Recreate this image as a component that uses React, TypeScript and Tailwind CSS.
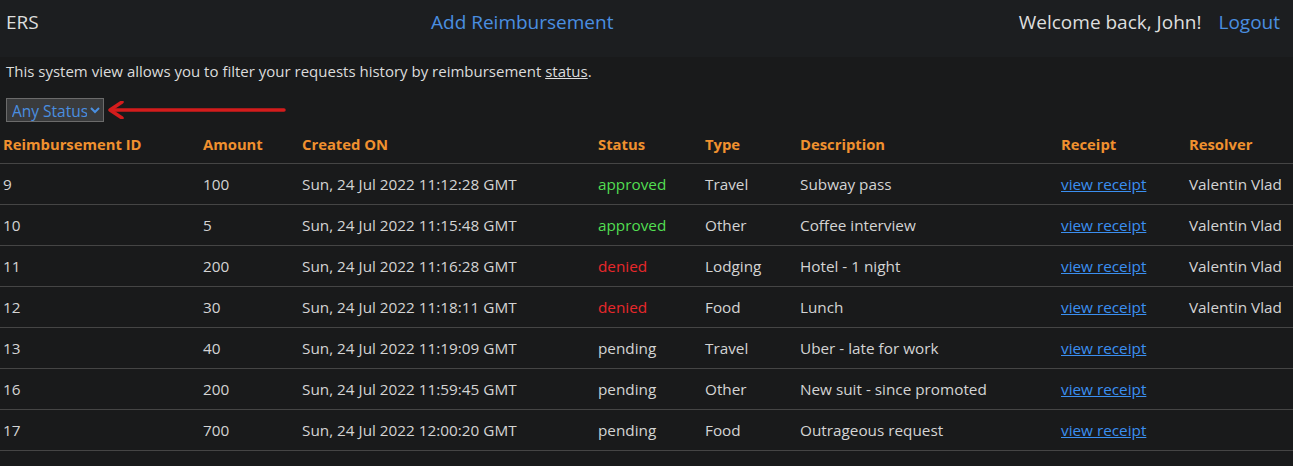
import { useState } from "react";

type Row = {
  id: number;
  amount: number;
  created: string;
  status: "approved" | "denied" | "pending";
  type: string;
  description: string;
  resolver: string;
};

const rows: Row[] = [
  { id: 9, amount: 100, created: "Sun, 24 Jul 2022 11:12:28 GMT", status: "approved", type: "Travel", description: "Subway pass", resolver: "Valentin Vlad" },
  { id: 10, amount: 5, created: "Sun, 24 Jul 2022 11:15:48 GMT", status: "approved", type: "Other", description: "Coffee interview", resolver: "Valentin Vlad" },
  { id: 11, amount: 200, created: "Sun, 24 Jul 2022 11:16:28 GMT", status: "denied", type: "Lodging", description: "Hotel - 1 night", resolver: "Valentin Vlad" },
  { id: 12, amount: 30, created: "Sun, 24 Jul 2022 11:18:11 GMT", status: "denied", type: "Food", description: "Lunch", resolver: "Valentin Vlad" },
  { id: 13, amount: 40, created: "Sun, 24 Jul 2022 11:19:09 GMT", status: "pending", type: "Travel", description: "Uber - late for work", resolver: "" },
  { id: 16, amount: 200, created: "Sun, 24 Jul 2022 11:59:45 GMT", status: "pending", type: "Other", description: "New suit - since promoted", resolver: "" },
  { id: 17, amount: 700, created: "Sun, 24 Jul 2022 12:00:20 GMT", status: "pending", type: "Food", description: "Outrageous request", resolver: "" },
];

const statusColor = {
  approved: "text-[#52de52]",
  denied: "text-[#e8282b]",
  pending: "text-[#d4d4d4]",
};

function App() {
  const [filter, setFilter] = useState("any");

  return (
    <div className="min-h-[466px] bg-[#191a1b] font-['Open_Sans',sans-serif] text-[#d4d4d4]">
      {/* nav */}
      <header className="flex h-[57px] items-start bg-[#1c1e20] pl-[6px] pr-[13px] pt-[8px] text-[19px]">
        <span className="w-[425px] text-[#dedede]">ERS</span>
        <a className="text-[#4a8fe0]" href="#">Add Reimbursement</a>
        <div className="ml-auto flex gap-[17px]">
          <span className="text-[#dedede]">Welcome back, John!</span>
          <a className="text-[#4a8fe0]" href="#">Logout</a>
        </div>
      </header>

      <p className="px-[6px] pt-[3px] text-[15px] text-[#dcdcdc]">
        This system view allows you to filter your requests history by reimbursement <u>status</u>.
      </p>

      <div className="flex items-center px-[6px] pt-[15px]">
        <select
          value={filter}
          onChange={(e) => setFilter(e.target.value)}
          className="h-[24px] w-[98px] border border-[#6b6b6b] bg-[#3a3b3c] pl-[1px] text-[15.5px] text-[#4a8fe0]"
        >
          <option value="any">Any Status</option>
          <option value="approved">approved</option>
          <option value="denied">denied</option>
          <option value="pending">pending</option>
        </select>
        <svg width="182" height="18" viewBox="0 0 182 18" className="ml-[2px]">
          <path d="M6 9 H178" stroke="#d41c1c" strokeWidth="3.5" strokeLinecap="round" />
          <path d="M16 1 L4 9 L16 17" stroke="#d41c1c" strokeWidth="3.5" fill="none" strokeLinecap="round" strokeLinejoin="round" />
        </svg>
      </div>

      <table className="mt-[1px] w-full table-fixed border-collapse text-left text-[15.3px]">
        <colgroup>
          <col className="w-[200px]" />
          <col className="w-[99px]" />
          <col className="w-[296px]" />
          <col className="w-[107px]" />
          <col className="w-[95px]" />
          <col className="w-[261px]" />
          <col className="w-[128px]" />
          <col />
        </colgroup>
        <thead>
          <tr className="h-[41px] border-b border-[#454545] pt-[2px] text-[14.8px] font-bold text-[#f0912f]">
            <th className="pl-[3px] pt-[2px]">Reimbursement ID</th>
            <th className="pl-[3px] pt-[2px]">Amount</th>
            <th className="pl-[3px] pt-[2px]">Created ON</th>
            <th className="pl-[3px] pt-[2px]">Status</th>
            <th className="pl-[3px] pt-[2px]">Type</th>
            <th className="pl-[3px] pt-[2px]">Description</th>
            <th className="pl-[3px] pt-[2px]">Receipt</th>
            <th className="pl-[3px] pt-[2px]">Resolver</th>
          </tr>
        </thead>
        <tbody>
          {rows
            .filter((r) => filter === "any" || r.status === filter)
            .map((r) => (
              <tr key={r.id} className="h-[41px] border-b border-[#454545]">
                <td className="pl-[3px]">{r.id}</td>
                <td className="pl-[3px]">{r.amount}</td>
                <td className="pl-[3px]">{r.created}</td>
                <td className={`pl-[3px] ${statusColor[r.status]}`}>{r.status}</td>
                <td className="pl-[3px]">{r.type}</td>
                <td className="pl-[3px]">{r.description}</td>
                <td className="pl-[3px]">
                  <a href="#" className="text-[#3b8ff0] underline">view receipt</a>
                </td>
                <td className="pl-[3px] whitespace-nowrap">{r.resolver}</td>
              </tr>
            ))}
        </tbody>
      </table>
    </div>
  );
}

export default App;
